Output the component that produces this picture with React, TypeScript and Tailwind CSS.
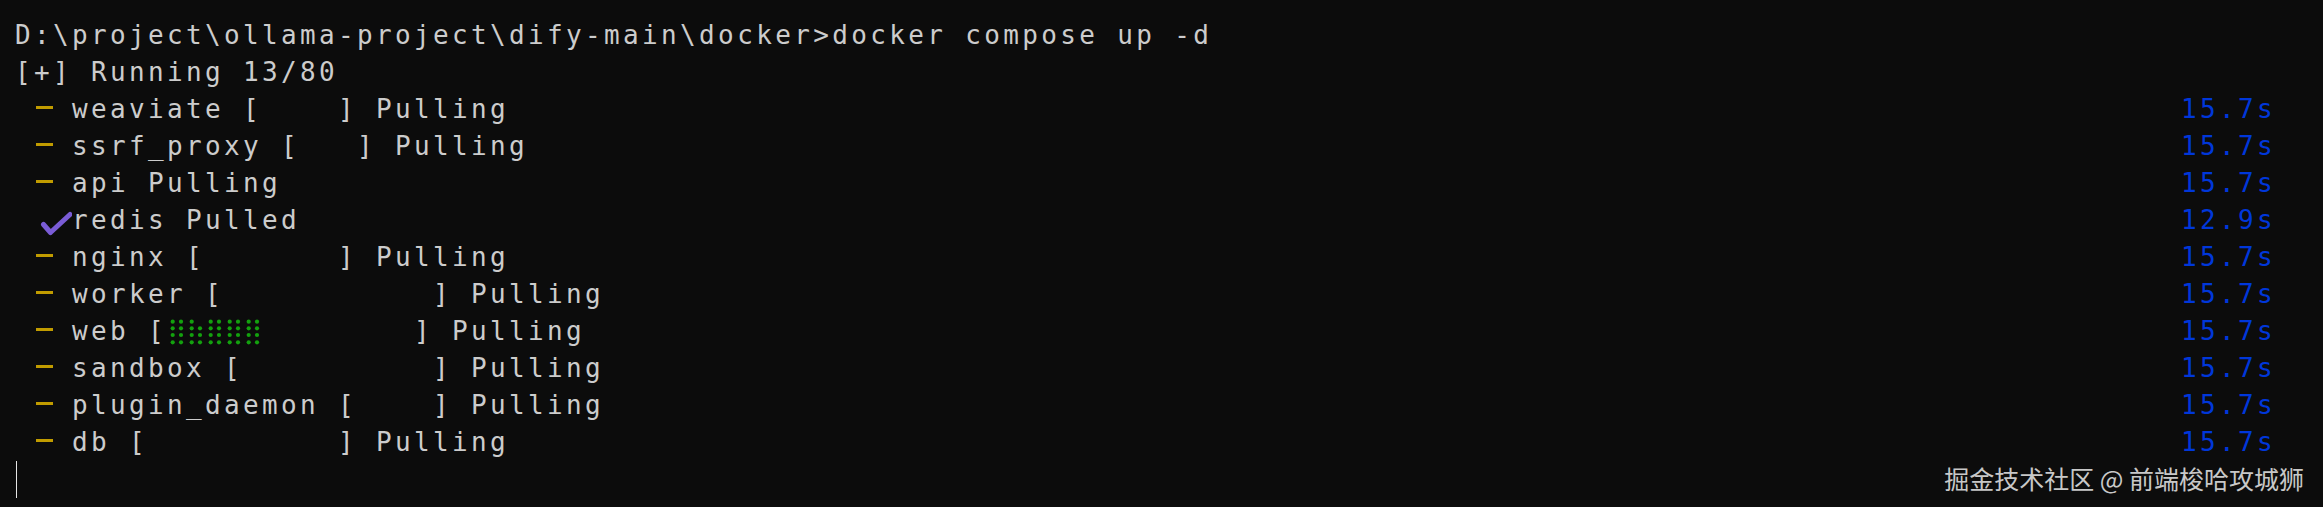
import React from "react";

// braille pattern per cell: [left col 4 dots, right col 4 dots], true = dot
const braille: boolean[][] = [
	[true, true, true, true, true, true, true, true],
	[true, true, true, true, false, true, true, true],
	[true, true, true, true, true, true, true, true],
	[true, true, true, true, true, true, true, true],
	[true, true, true, true, true, true, true, true],
];

function Dash() {
	return (
		<span className="inline-block align-top w-[19px] h-[37px] pt-[15px]">
			<span className="block ml-[2px] w-[17px] h-[3px] bg-[#c19c00]" />
		</span>
	);
}

function Check() {
	return (
		<span className="inline-block w-[38px] h-[37px] align-top">
			<svg width="38" height="37" viewBox="0 0 38 37">
				<path
					d="M9.5 22.5 L16.5 30.5 L36 12.5"
					fill="none"
					stroke="#7a5cd6"
					strokeWidth="5"
					strokeLinecap="round"
					strokeLinejoin="round"
				/>
			</svg>
		</span>
	);
}

function Progress() {
	const ys = [8.7, 15.3, 22, 29.3];
	return (
		<span className="inline-block w-[95px] h-[37px] align-top">
			<svg width="95" height="37" viewBox="0 0 95 37">
				{braille.map((cell, c) =>
					cell.map((on, d) =>
						on ? (
							<circle
								key={`${c}-${d}`}
								cx={c * 19 + (d < 4 ? 5.7 : 14)}
								cy={ys[d % 4]}
								r="2.1"
								fill="#13a10e"
							/>
						) : null
					)
				)}
			</svg>
		</span>
	);
}

const rows: { text: React.ReactNode; time: string }[] = [
	{ text: <>{" "}<Dash />{" weaviate [    ] Pulling"}</>, time: "15.7s" },
	{ text: <>{" "}<Dash />{" ssrf_proxy [   ] Pulling"}</>, time: "15.7s" },
	{ text: <>{" "}<Dash />{" api Pulling"}</>, time: "15.7s" },
	{ text: <>{" "}<Check />{"redis Pulled"}</>, time: "12.9s" },
	{ text: <>{" "}<Dash />{" nginx [       ] Pulling"}</>, time: "15.7s" },
	{ text: <>{" "}<Dash />{" worker [           ] Pulling"}</>, time: "15.7s" },
	{ text: <>{" "}<Dash />{" web ["}<Progress />{"        ] Pulling"}</>, time: "15.7s" },
	{ text: <>{" "}<Dash />{" sandbox [          ] Pulling"}</>, time: "15.7s" },
	{ text: <>{" "}<Dash />{" plugin_daemon [    ] Pulling"}</>, time: "15.7s" },
	{ text: <>{" "}<Dash />{" db [          ] Pulling"}</>, time: "15.7s" },
];

export default function App() {
	return (
		<div className="relative w-screen h-[507px] overflow-hidden bg-[#0c0c0c] text-[#cccccc] font-['DejaVu_Sans_Mono',monospace] text-[26px] leading-[37px] tracking-[3.35px]">
			<div className="pt-[17px] pl-[15px]">
				<div className="whitespace-pre">D:\project\ollama-project\dify-main\docker&gt;docker compose up -d</div>
				<div className="whitespace-pre">[+] Running 13/80</div>
				{rows.map((row, i) => (
					<div key={i} className="flex justify-between w-[2261px] h-[37px] whitespace-pre">
						<span>{row.text}</span>
						<span className="text-[#0037da]">{row.time}</span>
					</div>
				))}
				<div className="h-[37px] flex">
					<div className="ml-px w-px h-full bg-[#e6e6e6]" />
				</div>
			</div>
			<div className="absolute right-[19px] bottom-[16px] font-['Noto_Sans_CJK_SC',sans-serif] text-[25px] leading-none tracking-normal text-[#c8c8c8] whitespace-pre">
				掘金技术社区 @ 前端梭哈攻城狮
			</div>
		</div>
	);
}
